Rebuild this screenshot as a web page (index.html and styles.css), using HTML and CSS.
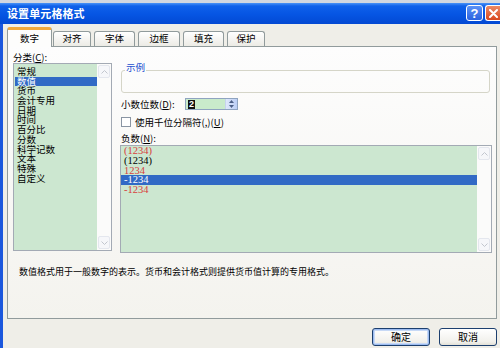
FILE: index.html
```html
<!DOCTYPE html>
<html lang="zh-CN">
<head>
<meta charset="utf-8">
<title>设置单元格格式</title>
<link rel="stylesheet" href="styles.css">
</head>
<body>
<div class="window">
  <div class="topstrip"></div>
  <div class="titlebar">
    <span class="title">设置单元格格式</span>
    <div class="tbtns">
      <span class="tb help">?</span>
      <span class="tb close"><svg width="9" height="9" viewBox="0 0 9 9"><path d="M1 1L8 8M8 1L1 8" stroke="#fff" stroke-width="2" stroke-linecap="round"/></svg></span>
    </div>
  </div>
  <div class="client">
    <div class="tabs">
      <div class="tab tab-first active">数字</div>
      <div class="tab tab-adj">对齐</div>
      <div class="tab">字体</div>
      <div class="tab tab-wide">边框</div>
      <div class="tab">填充</div>
      <div class="tab tab-last">保护</div>
    </div>
    <div class="panel">
      <div class="cols">
        <div class="leftcol">
          <div class="lbl">分类(<u>C</u>):</div>
          <div class="listbox cat">
            <div class="items cat-items">
              <div class="item">常规</div>
              <div class="item sel">数值</div>
              <div class="item">货币</div>
              <div class="item">会计专用</div>
              <div class="item">日期</div>
              <div class="item">时间</div>
              <div class="item">百分比</div>
              <div class="item">分数</div>
              <div class="item">科学记数</div>
              <div class="item">文本</div>
              <div class="item">特殊</div>
              <div class="item">自定义</div>
            </div>
            <div class="vscroll">
              <div class="sbtn"><svg width="7" height="4" viewBox="0 0 7 4"><path d="M0.5 3.5L3.5 0.5L6.5 3.5" stroke="#c2c6ce" fill="none"/></svg></div>
              <div class="sbtn"><svg width="7" height="4" viewBox="0 0 7 4"><path d="M0.5 0.5L3.5 3.5L6.5 0.5" stroke="#c2c6ce" fill="none"/></svg></div>
            </div>
          </div>
        </div>
        <div class="rightcol">
          <fieldset class="group"><legend>示例</legend></fieldset>
          <div class="row decimals">
            <span class="dec-label">小数位数(<u>D</u>):</span>
            <div class="spin">
              <div class="spin-val"><span class="spin-sel">2</span></div>
              <div class="spin-btns">
                <div class="spin-half"><svg width="5" height="3" viewBox="0 0 5 3"><path d="M0 3L2.5 0L5 3Z" fill="#4b5f86"/></svg></div>
                <div class="spin-half"><svg width="5" height="3" viewBox="0 0 5 3"><path d="M0 0L2.5 3L5 0Z" fill="#4b5f86"/></svg></div>
              </div>
            </div>
          </div>
          <div class="row check">
            <span class="cb"></span>
            <span>使用千位分隔符(,)(<u>U</u>)</span>
          </div>
          <div class="lbl neg-lbl">负数(<u>N</u>):</div>
          <div class="listbox neg">
            <div class="items neg-items">
              <div class="item red">(1234)</div>
              <div class="item">(1234)</div>
              <div class="item red">1234</div>
              <div class="item sel">-1234</div>
              <div class="item red">-1234</div>
            </div>
            <div class="vscroll">
              <div class="sbtn"><svg width="7" height="4" viewBox="0 0 7 4"><path d="M0.5 3.5L3.5 0.5L6.5 3.5" stroke="#c2c6ce" fill="none"/></svg></div>
              <div class="sbtn"><svg width="7" height="4" viewBox="0 0 7 4"><path d="M0.5 0.5L3.5 3.5L6.5 0.5" stroke="#c2c6ce" fill="none"/></svg></div>
            </div>
          </div>
        </div>
      </div>
      <div class="desc">数值格式用于一般数字的表示。货币和会计格式则提供货币值计算的专用格式。</div>
    </div>
    <div class="buttons">
      <button class="btn default">确定</button>
      <button class="btn">取消</button>
    </div>
  </div>
</div>
</body>
</html>
```

FILE: styles.css
```css
* { box-sizing: border-box; margin: 0; padding: 0; }
html, body { width: 500px; height: 348px; overflow: hidden; }
body {
  font-family: "Noto Sans CJK SC", "Noto Sans", sans-serif;
  font-size: 9.5px;
  color: #000;
  background: #efeee8;
}
u { text-decoration: underline; }

.window {
  width: 500px;
  height: 348px;
  display: flex;
  flex-direction: column;
  background: #efeee8;
}
.topstrip { height: 3px; background: #d2d7e0; }
.titlebar {
  height: 21px;
  display: flex;
  align-items: center;
  justify-content: space-between;
  padding-left: 7px;
  background: linear-gradient(#4a93f7 0, #0f61ea 3px, #0655e3 55%, #0349d3 100%);
}
.title {
  color: #fff;
  font-weight: bold;
  font-size: 11px;
  line-height: 1;
  letter-spacing: 0.1px;
}
.tbtns { display: flex; gap: 2px; align-self: flex-start; margin-top: 2px; }
.tb {
  height: 16px;
  border: 1px solid #fff;
  border-radius: 3px;
  display: flex;
  align-items: center;
  justify-content: center;
  color: #fff;
}
.help {
  width: 17px;
  background: linear-gradient(#5b92f5, #2a62e0);
  font-family: "Liberation Sans", sans-serif;
  font-weight: bold;
  font-size: 13px;
  line-height: 1;
}
.close {
  width: 15px;
  border-right: none;
  border-radius: 3px 0 0 3px;
  background: linear-gradient(#ec8a66, #d9481f);
}

.client {
  flex: 1;
  display: flex;
  flex-direction: column;
  border-left: 3px solid #1b57dd;
  padding: 3px 3px 0 4px;
}

.tabs {
  height: 19px;
  display: flex;
  align-items: flex-end;
}
.tab {
  width: 41px;
  height: 15px;
  margin-left: 3px;
  border: 1px solid #919b9c;
  border-bottom: none;
  border-radius: 3px 3px 0 0;
  background: linear-gradient(#ffffff, #ecebe5);
  display: flex;
  align-items: center;
  justify-content: center;
  line-height: 1;
}
.tab-first { width: 45px; margin-left: 0; }
.tab-adj { width: 38px; margin-left: 1px; }
.tab-wide { width: 42px; }
.tab-last { width: 38px; }
.tab.active {
  height: 20px;
  margin-bottom: -1px;
  border-top: 3px solid #f0a93c;
  background: #fdfdfc;
  position: relative;
  z-index: 1;
}

.panel {
  height: 273px;
  border: 1px solid #919b9c;
  background: linear-gradient(#fdfdfd, #f4f3ee);
  padding: 5px 3px 0 5px;
  display: flex;
  flex-direction: column;
}
.cols { display: flex; gap: 7px; }
.leftcol { width: 99px; display: flex; flex-direction: column; }
.lbl { height: 11px; line-height: 11px; }
.rightcol { width: 373px; display: flex; flex-direction: column; }

.listbox {
  display: flex;
  border: 1px solid #a3aab4;
  background: #cce7d0;
}
.cat { height: 188px; }
.neg { height: 108px; margin-left: 1px; width: 372px; }
.items { flex: 1; }
.cat-items { padding: 3px 0 0 1px; }
.neg-items {
  font-family: "Liberation Serif", serif;
  font-size: 10.5px;
}
.item {
  height: 9.7px;
  line-height: 9.7px;
  padding-left: 2px;
  white-space: nowrap;
}
.neg-items .item { height: 9.8px; line-height: 9.8px; padding-left: 3px; }
.item.sel { background: #316ac5; color: #fff; }
.item.red { color: #d8413c; }

.vscroll {
  width: 14px;
  background: #fbfbfa;
  display: flex;
  flex-direction: column;
  justify-content: space-between;
  padding: 1px;
}
.sbtn {
  height: 13px;
  border: 1px solid #e4e7ee;
  border-radius: 2px;
  background: #f6f7fa;
  display: flex;
  align-items: center;
  justify-content: center;
}

.group {
  height: 31px;
  margin: 10px 2px 0 2px;
  border: 1px solid #d5d5c8;
  border-radius: 3px;
  padding: 0;
}
.group legend {
  margin-left: 3px;
  padding: 0 1px 6px;
  line-height: 11px;
  color: #1d50d0;
}

.row { display: flex; align-items: center; height: 14px; margin-top: 4px; padding-left: 2px; }
.dec-label { width: 64px; }
.spin {
  width: 53px;
  height: 12px;
  border: 1px solid #8fa4c0;
  background: #c9ebcb;
  display: flex;
}
.spin-val { flex: 1; padding-left: 2px; display: flex; align-items: center; }
.spin-sel {
  background: #101010;
  color: #fff;
  font-family: "Liberation Sans", sans-serif;
  font-size: 9px;
  line-height: 9px;
  padding: 0 1px;
  font-weight: bold;
}
.spin-btns {
  width: 12px;
  display: flex;
  flex-direction: column;
  background: linear-gradient(90deg, #dfe8fb, #bccff5);
  border-left: 1px solid #c6d3ee;
}
.spin-half { flex: 1; display: flex; align-items: center; justify-content: center; }

.cb {
  width: 10px;
  height: 10px;
  border: 1px solid #8a95a3;
  background: #fff;
  margin-right: 4px;
}
.neg-lbl { margin-top: 4px; height: 10px; line-height: 10px; padding-left: 2px; }
.neg { margin-top: 2px; }

.desc {
  margin-top: 13px;
  padding-left: 6px;
  font-size: 9px;
  line-height: 12px;
}

.buttons {
  margin-top: 9px;
  display: flex;
  justify-content: flex-end;
  gap: 9px;
}
.btn {
  width: 58px;
  height: 18px;
  border: 1px solid #1c3f6e;
  border-radius: 3px;
  background: linear-gradient(#ffffff, #f1f0eb 80%, #e2e0d6);
  font-family: "Noto Sans CJK SC", sans-serif;
  font-size: 10px;
  line-height: 1;
  color: #000;
}
.btn.default {
  box-shadow: inset 0 0 0 1px #9dbcf0, inset 0 0 0 2px #c7d9f6;
}
```
